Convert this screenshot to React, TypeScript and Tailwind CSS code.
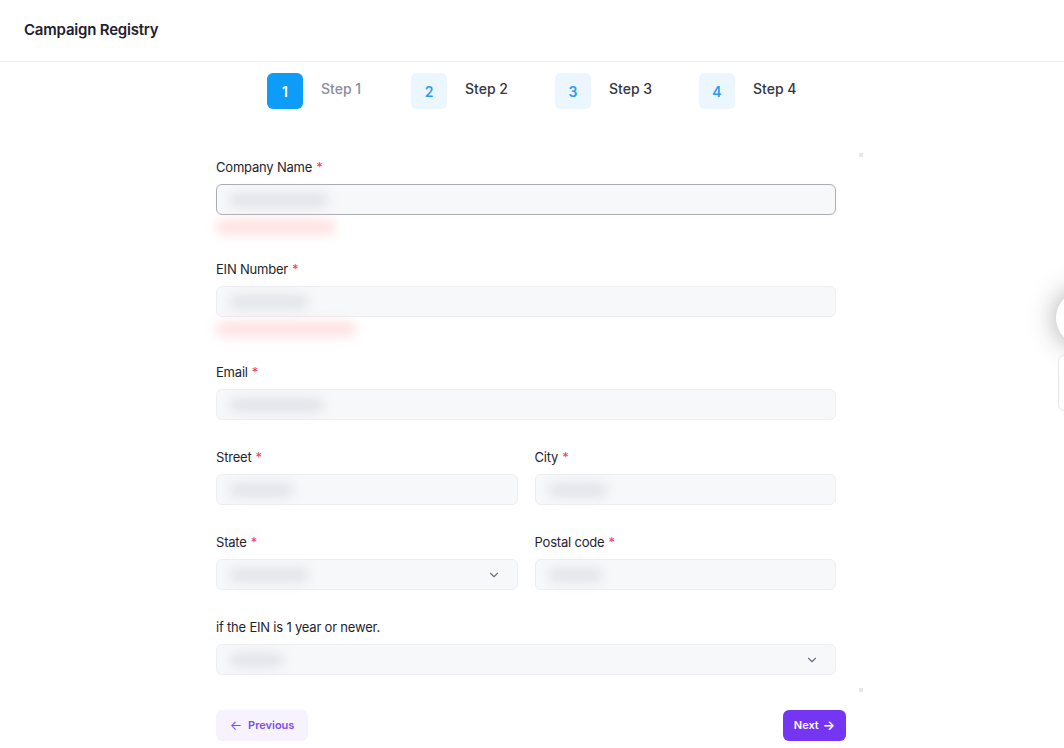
import { ChevronDown } from "lucide-react";

const steps = [1, 2, 3, 4];

const Blur = ({ w, tone = "bg-gray-300" }: { w: string; tone?: string }) => (
  <span className={`block h-[14px] rounded-full blur-[6px] opacity-60 ${tone} ${w}`} />
);

const Label = ({ text, required = true }: { text: string; required?: boolean }) => (
  <div className="h-[18px] mb-2 text-[13px] leading-[18px] text-[#1f2430] tracking-[-0.2px]">
    {text}
    {required && <span className="ml-1 text-[#f0386b]">*</span>}
  </div>
);

const Input = ({
  blur,
  select = false,
  focused = false,
}: {
  blur: string;
  select?: boolean;
  focused?: boolean;
}) => (
  <div
    className={`h-[31px] rounded-md border bg-[#f7f8fa] flex items-center justify-between px-3 ${
      focused ? "border-[#a9adb5]" : "border-[#eceef2]"
    }`}
  >
    <Blur w={blur} />
    {select && <ChevronDown size={14} className="text-gray-500 mr-1" />}
  </div>
);

const ErrorLine = ({ w, h }: { w: string; h: string }) => (
  <div className={`mt-[5px] ${h}`}>
    <Blur w={w} tone="bg-red-200" />
  </div>
);

export default function App() {
  return (
    <div
      className="relative w-[1064px] h-[748px] overflow-hidden bg-white"
      style={{ fontFamily: "Inter, 'Noto Sans', sans-serif" }}
    >
      <header className="h-[62px] border-b border-[#eff0f3] px-6 flex items-center">
        <h1 className="text-[15px] font-semibold text-[#1d2130] tracking-[-0.2px]">Campaign Registry</h1>
      </header>

      <div className="flex ml-[267px] mt-[11px]">
        {steps.map((n) => (
          <div key={n} className="w-[144px] flex items-center gap-[18px]">
            <div
              className={`w-9 h-9 rounded-md flex items-center justify-center text-[14px] font-semibold ${
                n === 1 ? "bg-[#0d9cf7] text-white" : "bg-[#ebf6ff] text-[#2e9bf0] font-medium"
              }`}
            >
              {n}
            </div>
            <span
              className={`text-[14px] font-medium -mt-[5px] ${n === 1 ? "text-[#8b8c9e]" : "text-[#33353f]"}`}
            >
              Step {n}
            </span>
          </div>
        ))}
      </div>

      <div className="ml-[216px] w-[630px] mt-[49px]">
        <div className="w-[620px] flex flex-col gap-[28px]">
          <div>
            <Label text="Company Name" />
            <Input blur="w-[100px]" focused />
            <ErrorLine w="w-[120px]" h="h-[12px]" />
          </div>
          <div>
            <Label text="EIN Number" />
            <Input blur="w-[80px]" />
            <ErrorLine w="w-[140px]" h="h-[13px]" />
          </div>
          <div>
            <Label text="Email" />
            <Input blur="w-[95px]" />
          </div>
          <div className="grid grid-cols-2 gap-[17px]">
            <div>
              <Label text="Street" />
              <Input blur="w-[65px]" />
            </div>
            <div>
              <Label text="City" />
              <Input blur="w-[60px]" />
            </div>
          </div>
          <div className="grid grid-cols-2 gap-[17px]">
            <div>
              <Label text="State" />
              <Input blur="w-[80px]" select />
            </div>
            <div>
              <Label text="Postal code" />
              <Input blur="w-[55px]" />
            </div>
          </div>
          <div>
            <Label text="if the EIN is 1 year or newer." required={false} />
            <Input blur="w-[55px]" select />
          </div>
        </div>

        <div className="flex justify-between mt-[35px]">
          <button className="h-[31px] w-[92px] rounded-md bg-[#f6f3ff] text-[#7a4ef0] text-[11px] font-semibold flex items-center justify-center gap-1.5">
            <span className="text-[13px] font-normal">←</span> Previous
          </button>
          <button className="h-[31px] w-[63px] rounded-md bg-[#7436f2] text-white text-[11px] font-semibold flex items-center justify-center gap-1">
            Next <span className="text-[13px]">→</span>
          </button>
        </div>
      </div>

      <span className="absolute left-[859px] top-[153px] w-[4px] h-[4px] bg-gray-200" />
      <span className="absolute left-[859px] top-[688px] w-[4px] h-[4px] bg-gray-200" />

      <div className="absolute right-[-48px] top-[290px] w-[56px] h-[56px] rounded-full bg-white shadow-[0_0_28px_rgba(0,0,0,0.35)]" />
      <div className="absolute right-[-20px] top-[355px] w-[26px] h-[56px] rounded-md border border-gray-200 bg-white" />
    </div>
  );
}
